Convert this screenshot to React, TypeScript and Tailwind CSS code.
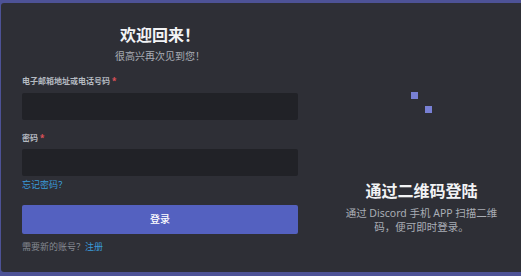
import React from 'react';

const font = { fontFamily: '"Noto Sans", "Noto Sans CJK SC", sans-serif' };

/**
 * Login card: form on the left, QR login on the right.
 */
export default function App() {
  return (
    <div
      className="w-[521px] h-[276px] bg-[#4d5296] pt-[3px] pb-[4px] pl-[1px] overflow-hidden"
      style={font}
    >
      <div className="flex h-full bg-[#2e2f36] rounded-tl-[3px] rounded-bl-[3px]">
        {/* Form */}
        <div className="w-[319px] pl-[21px] pr-[22px] pt-[22px] flex flex-col">
          <h1 className="text-center text-[16px] leading-[20px] font-bold text-[#f2f3f5]">
            欢迎回来！
          </h1>
          <p className="mt-[4px] text-center text-[10px] leading-[14px] text-[#a9adb5]">
            很高兴再次见到您！
          </p>

          <label className="mt-[12px] text-[8px] leading-[12px] font-bold text-[#b5bac1]">
            电子邮箱地址或电话号码 <span className="text-[#e0525a]">*</span>
          </label>
          <div className="mt-[6px] h-[27px] rounded-[2px] bg-[#212227]" />

          <label className="mt-[12px] text-[8px] leading-[12px] font-bold text-[#b5bac1]">
            密码 <span className="text-[#e0525a]">*</span>
          </label>
          <div className="mt-[5px] h-[27px] rounded-[2px] bg-[#212227]" />

          <a className="mt-[3px] text-[9px] leading-[12px] text-[#3a9ad9]">忘记密码？</a>

          <button className="mt-[14px] h-[29px] rounded-[2px] bg-[#5461c0] text-[10px] font-medium text-white">
            登录
          </button>

          <p className="mt-[7px] text-[9px] leading-[12px] text-[#858991]">
            需要新的账号？<a className="text-[#3a9ad9]">注册</a>
          </p>
        </div>

        {/* QR login */}
        <div className="flex-1 flex flex-col items-center pt-[44px] pl-[2px]">
          <div className="w-[110px] h-[110px] flex items-center justify-center">
            <div className="grid grid-cols-2 gap-[7px]">
              <div className="w-[7px] h-[7px] bg-[#7880d4]" />
              <div className="w-[7px] h-[7px]" />
              <div className="w-[7px] h-[7px]" />
              <div className="w-[7px] h-[7px] bg-[#7880d4]" />
            </div>
          </div>
          <h2 className="mt-[24px] text-[16px] leading-[20px] font-bold text-[#f2f3f5]">
            通过二维码登陆
          </h2>
          <p className="mt-[5px] text-center text-[10.5px] leading-[14px] text-[#a9adb5]">
            通过 Discord 手机 APP 扫描二维
            <br />
            码，便可即时登录。
          </p>
        </div>
      </div>
    </div>
  );
}
